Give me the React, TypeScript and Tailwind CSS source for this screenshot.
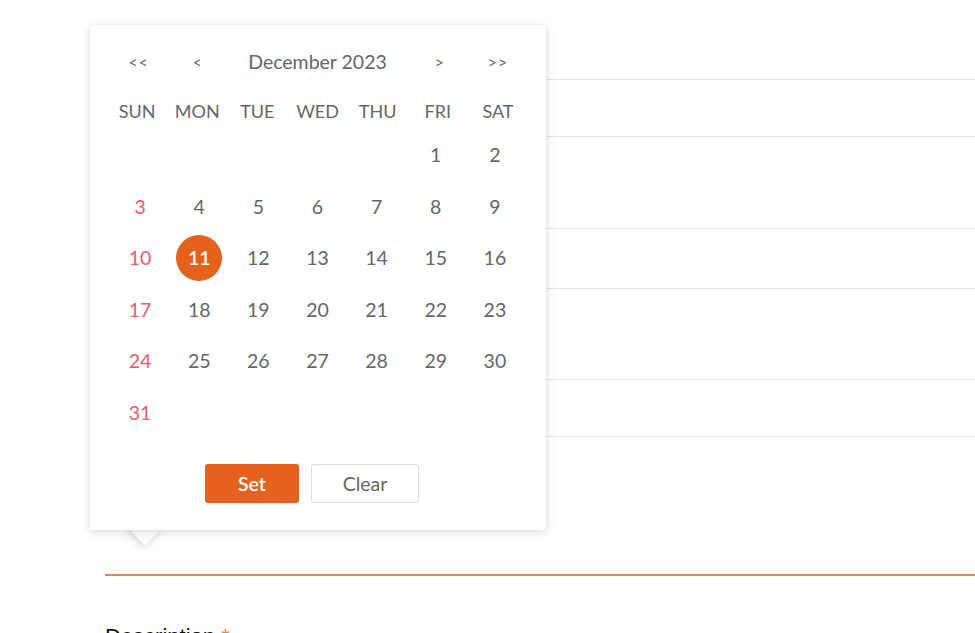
import React from "react";

const weekdays = ["SUN", "MON", "TUE", "WED", "THU", "FRI", "SAT"];
const days: (number | null)[] = [
  null, null, null, null, null, 1, 2,
  3, 4, 5, 6, 7, 8, 9,
  10, 11, 12, 13, 14, 15, 16,
  17, 18, 19, 20, 21, 22, 23,
  24, 25, 26, 27, 28, 29, 30,
  31, null, null, null, null, null, null,
];

export default function App() {
  return (
    <div className="relative w-[975px] h-[633px] overflow-hidden bg-white" style={{ fontFamily: "Lato, 'Open Sans', sans-serif" }}>
      {/* Background form */}
      <div className="pl-[105px]">
        <div className="h-[80px] border-b border-[#e6e6e6]" />
        <div className="h-[57px] border-b border-[#e6e6e6]" />
        <div className="h-[92px] border-b border-[#e6e6e6]" />
        <div className="h-[60px] border-b border-[#e6e6e6]" />
        <div className="h-[91px] border-b border-[#e6e6e6]" />
        <div className="h-[57px] border-b border-[#e6e6e6]" />
        <div className="h-[139px] border-b-2 border-[#f0843c]" />
        <div className="pt-[50px] text-[22px] text-[#111] leading-none" style={{ fontFamily: "'Liberation Sans', Arial, sans-serif" }}>
          Description <span className="text-[#f0843c]">*</span>
        </div>
      </div>

      {/* Arrow */}
      <div className="absolute left-[134px] top-[519px] w-[22px] h-[22px] rotate-45 bg-white shadow-[0_2px_8px_rgba(0,0,0,0.18)]" />

      {/* Popup */}
      <div className="absolute left-[90px] top-[25px] w-[456px] h-[505px] bg-white rounded-[4px] shadow-[0_2px_10px_rgba(0,0,0,0.16)] pt-[26px]">
        <div className="pl-[17px] w-[438px] grid grid-cols-7 h-[22px] items-center text-[#666] text-[19.5px] leading-none">
          <div className="text-center text-[16px] tracking-[1px] pl-[3px]">&lt;&lt;</div>
          <div className="text-center text-[16px]">&lt;</div>
          <div className="col-span-3 text-center">December 2023</div>
          <div className="text-center text-[16px] pl-[3px]">&gt;</div>
          <div className="text-center text-[16px] tracking-[1px]">&gt;&gt;</div>
        </div>
        <div className="mt-[26px] pl-[17px] w-[438px] grid grid-cols-7 h-[24px] items-center text-[#666] text-[18px] leading-none">
          {weekdays.map((w) => (
            <div key={w} className="text-center">{w}</div>
          ))}
        </div>
        <div className="mt-[6px] ml-[20.5px] w-[414px] grid grid-cols-7 text-[19.5px] leading-none">
          {days.map((d, i) => {
            const isSun = i % 7 === 0;
            return (
              <div key={i} className="h-[51.5px] flex items-center justify-center">
                {d === 11 ? (
                  <div className="w-[46px] h-[46px] rounded-full bg-[#e4621b] text-white font-semibold flex items-center justify-center">11</div>
                ) : d !== null ? (
                  <span className={isSun ? "text-[#f25a6e]" : "text-[#666]"}>{d}</span>
                ) : null}
              </div>
            );
          })}
        </div>
        <div className="mt-[26px] pl-[115px] flex gap-[12px]">
          <button className="w-[94px] h-[39px] rounded-[3px] bg-[#e4621b] text-white text-[19.5px] font-semibold">Set</button>
          <button className="w-[108px] h-[39px] rounded-[3px] border border-[#dcdcdc] bg-white text-[#666] text-[19.5px]">Clear</button>
        </div>
      </div>
    </div>
  );
}
